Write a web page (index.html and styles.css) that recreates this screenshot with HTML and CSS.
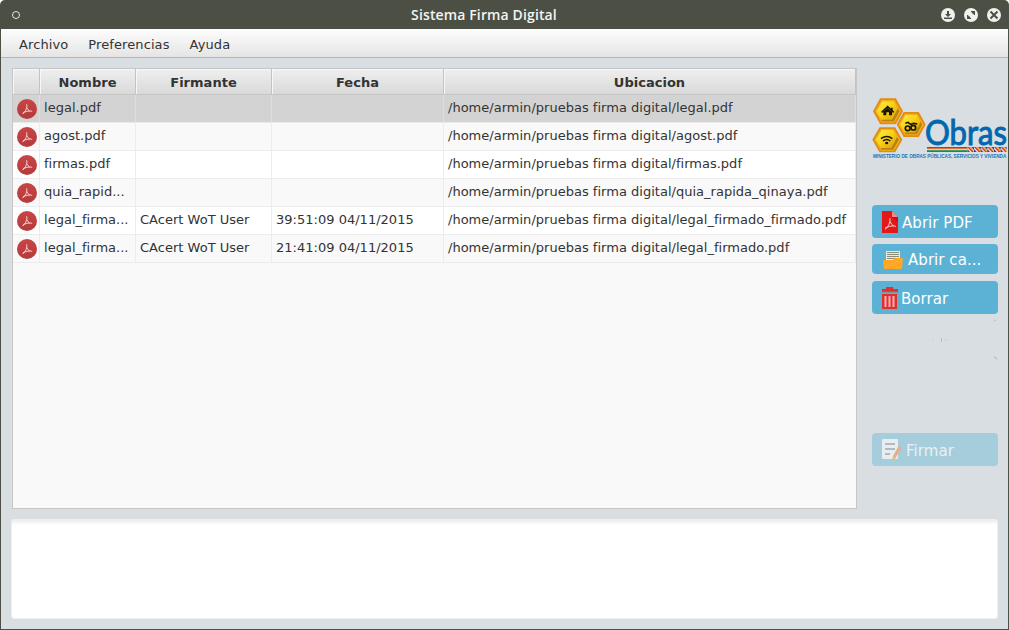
FILE: index.html
```html
<!DOCTYPE html>
<html lang="es">
<head>
<meta charset="utf-8">
<title>Sistema Firma Digital</title>
<link rel="stylesheet" href="styles.css">
</head>
<body>
<svg class="defs" width="0" height="0" aria-hidden="true">
  <defs>
    <linearGradient id="disc" x1="0" y1="0" x2="0" y2="1"><stop offset="0" stop-color="#ca4445"/><stop offset="1" stop-color="#b43a3b"/></linearGradient>
    <symbol id="pdf" viewBox="0 0 20 20">
      <circle cx="10" cy="10" r="10" fill="url(#disc)"/>
      <path d="M9.200 5.200q1 0 .7 2.600-.5 3-2.500 5.600-1.200 1.400-2 1.300M9.700 8.500q1 2.400 3.400 4M6 13.600q4-1.700 7.500-1.700 1.800.1 1.300 1" fill="none" stroke="#f3dede" stroke-width=".9"/>
    </symbol>
    <linearGradient id="gold" x1="0" y1="0" x2="1" y2="1"><stop offset="0" stop-color="#fff04a"/><stop offset=".5" stop-color="#f8cf12"/><stop offset="1" stop-color="#d99a0c"/></linearGradient>
    <symbol id="hex" viewBox="0 0 90 76" preserveAspectRatio="none">
      <path d="M1 38 22 1h46l21 37-21 37H22z" fill="#e38a12"/>
      <path d="M7 38 26 6h38l19 32-19 32H26z" fill="#f3b21c"/>
      <path d="M11 38 28 9h34l17 29-17 29H28z" fill="#b98312"/>
      <path d="M11 38 28 9h34l12 20-17 33H25z" fill="url(#gold)"/>
    </symbol>
    <pattern id="wip" x="322" y="171" width="20" height="15" patternUnits="userSpaceOnUse">
      <path d="M0 0h20v15H0z" fill="#f3e6df"/>
      <path d="M0 0h6l14 15h-6z" fill="#c8232c"/><path d="M6 0h5l9 10v5z" fill="#efc51b"/><path d="M12 0h8v9z" fill="#383c91"/><path d="M0 6l8 9H0z" fill="#51367e"/>
    </pattern>
  </defs>
</svg>
<div class="window">
  <header class="titlebar">
    <span class="dot"></span>
    <h1 class="title">Sistema Firma Digital</h1>
    <div class="controls">
      <svg viewBox="0 0 14 14"><circle cx="7" cy="7" r="7" fill="#f0f1ef"/><path d="M6 3h2v3h2L7 9 4 6h2zM3 9.500h8v1.500H3z" fill="#4b4f44"/></svg>
      <svg viewBox="0 0 14 14"><circle cx="7" cy="7" r="7" fill="#f0f1ef"/><path d="M7 3h4v4H9.700V5.700L9 6 8 5V4.300H7zM3 7h1.300v1.300L5 8l1 1v.7h1V11H3z" fill="#4b4f44"/></svg>
      <svg viewBox="0 0 14 14"><circle cx="7" cy="7" r="7" fill="#f0f1ef"/><path d="M3.500 3.500l7 7m0-7l-7 7" stroke="#4b4f44" stroke-width="2"/></svg>
    </div>
  </header>
  <nav class="menubar"><span>Archivo</span><span>Preferencias</span><span>Ayuda</span></nav>
  <main class="workspace">
    <section class="files">
      <div class="row head"><span></span><span>Nombre</span><span>Firmante</span><span>Fecha</span><span>Ubicacion</span></div>
      <div class="row selected"><span><svg class="pdf"><use href="#pdf"/></svg></span><span>legal.pdf</span><span></span><span></span><span>/home/armin/pruebas firma digital/legal.pdf</span></div>
      <div class="row alt"><span><svg class="pdf"><use href="#pdf"/></svg></span><span>agost.pdf</span><span></span><span></span><span>/home/armin/pruebas firma digital/agost.pdf</span></div>
      <div class="row"><span><svg class="pdf"><use href="#pdf"/></svg></span><span>firmas.pdf</span><span></span><span></span><span>/home/armin/pruebas firma digital/firmas.pdf</span></div>
      <div class="row alt"><span><svg class="pdf"><use href="#pdf"/></svg></span><span>quia_rapid...</span><span></span><span></span><span>/home/armin/pruebas firma digital/quia_rapida_qinaya.pdf</span></div>
      <div class="row"><span><svg class="pdf"><use href="#pdf"/></svg></span><span>legal_firma...</span><span>CAcert WoT User</span><span>39:51:09 04/11/2015</span><span>/home/armin/pruebas firma digital/legal_firmado_firmado.pdf</span></div>
      <div class="row alt"><span><svg class="pdf"><use href="#pdf"/></svg></span><span>legal_firma...</span><span>CAcert WoT User</span><span>21:41:09 04/11/2015</span><span>/home/armin/pruebas firma digital/legal_firmado.pdf</span></div>
    </section>
    <aside class="sidebar">
      <svg class="logo" viewBox="36 24 408 186">
        <use href="#hex" x="38" y="24" width="92" height="80"/>
        <use href="#hex" x="109" y="65" width="89" height="77"/>
        <use href="#hex" x="36" y="111" width="92" height="77"/>
        <path d="M65 67 83 50l18 17" fill="none" stroke="#171507" stroke-width="5"/>
        <path d="M93 53h5v9h-5zM70 65l13-11 13 11v11h-9V67h-8v9h-9z" fill="#171507"/>
        <g fill="none" stroke="#171507" stroke-width="5"><circle cx="143" cy="115" r="7"/><circle cx="160" cy="113" r="7"/><path d="M136 100l8-3 8 6 9-3 11 2"/></g>
        <g fill="none" stroke="#171507" stroke-width="4.500"><path d="M63 146q17-13 34 0M69 153q11-9 22 0"/></g><ellipse cx="80" cy="159" rx="5" ry="4" fill="#171507"/>
        <text class="brand" x="195" y="165" textLength="246" lengthAdjust="spacingAndGlyphs">Obras</text>
        <path d="M201 171h121v5H201z" fill="#d92528"/><path d="M201 176h121v5H201z" fill="#eee02d"/><path d="M201 181h121v5H201z" fill="#148d50"/>
        <path d="M322 171h118v15H322z" fill="url(#wip)"/>
        <text class="ministry" x="39" y="203" textLength="400" lengthAdjust="spacingAndGlyphs">MINISTERIO DE OBRAS PÚBLICAS, SERVICIOS Y VIVIENDA</text>
      </svg>
      <button class="btn open"><svg width="16" height="22" viewBox="0 0 16 22"><path d="M0 0h10l6 6v16H0z" fill="#e31818"/><path d="M10 0l6 6h-6z" fill="#ff8585"/><path d="M10 6h6v5z" fill="#c51012"/><path d="M7.300 7q1 0 .7 3-.6 3.500-2.800 6.500-1.300 1.800-2.200 1.500M8 10.500q1.200 3 3.700 4.500M3 17q4.500-2.200 9-2.200 2 .2 1.500 1.200" fill="none" stroke="#fbd9d9" stroke-width=".9"/></svg><span>Abrir PDF</span></button>
      <button class="btn folder"><svg width="20" height="18" viewBox="0 0 20 18"><path d="M3 0h14v12H3z" fill="#ecebd8"/><path d="M4 1.500h12M4 3.500h12M4 5.500h12M4 7.500h8" stroke="#8b8d78"/><path d="M1 9h9l2-2h7l1 1-1 10H1L0 10z" fill="#ffa726"/></svg><span>Abrir ca...</span></button>
      <button class="btn delete"><svg width="16" height="22" viewBox="0 0 16 22"><path d="M4 0h7v2h5v3H0V2h4zM0 7h15v15H0z" fill="#df3030"/><path d="M0 4.500h16v1H0z" fill="#8c7b82"/><path d="M3.500 9v11M7.500 9v11M11.500 9v11" stroke="#ffafaf" stroke-width="2"/></svg><span>Borrar</span></button>
      <svg class="traces" viewBox="0 0 126 119"><path d="M122 6l2 1M69.500 24v4" stroke="#9fcbdc" fill="none"/><path d="M72 26h4M61 24v3" stroke="#c4d9e1"/><path d="M122 43q2 0 3 2.500" stroke="#87bfd5" fill="none"/></svg>
      <button class="btn sign" disabled><svg width="20" height="22" viewBox="0 0 20 22"><rect width="16" height="20" rx="1" fill="#e9edf0"/><path d="M3 5h10M3 10h10M3 15h5" stroke="#afbcc3" stroke-width="2"/><path d="M16.500 7l3 2-6 10-3 1 .5-3z" fill="#e3ae8c"/><path d="M11 18l3 1-4 3z" fill="#d9c391"/></svg><span>Firmar</span></button>
    </aside>
    <textarea class="log" aria-label="Mensajes"></textarea>
  </main>
</div>
</body>
</html>
```

FILE: styles.css
```css
* { box-sizing: border-box; }
body { margin: 0; background: #fff; font-family: "DejaVu Sans", sans-serif; font-size: 13px; color: #333; }
.defs { position: absolute; }
.window { width: 1009px; height: 630px; padding: 0 1px 1px; background: #4b4f44; border-radius: 5px 5px 0 0; display: flex; flex-direction: column; overflow: hidden; }
.titlebar { height: 29px; flex: none; display: grid; grid-template-columns: 100px 1fr 100px; align-items: center; padding: 0 7px 0 11px; }
.dot { width: 8px; height: 8px; border: 1.500px solid #e4e5e1; border-radius: 50%; margin-top: 1px; }
.title { margin: 0; padding-right: 45px; text-align: center; color: #f4f4f2; font: 600 14px/28px "Open Sans", "Noto Sans", sans-serif; letter-spacing: .13px; white-space: nowrap; }
.controls { display: flex; gap: 9px; justify-content: flex-end; padding-top: 1px; }
.controls svg { width: 14px; height: 14px; }
.menubar { height: 29px; flex: none; display: flex; gap: 20px; padding: 0 18px; line-height: 31px; letter-spacing: .1px; background: linear-gradient(#fdfdfd, #e5e5e5); border-bottom: 1px solid #b5b5b1; }
.workspace { flex: 1; background: #d9dee2; display: grid; grid-template-columns: 845px 136px; column-gap: 15px; grid-template-rows: 441px 101px; row-gap: 10px; padding: 10px 0 0 11px; }
.files { border: 1px solid #c6c6c6; background: #f9f9f9; letter-spacing: .015px; }
.row { display: grid; grid-template-columns: 27px 96px 136px 172px 412px; height: 28px; background: #fff; border-bottom: 1px solid #ececec; line-height: 25px; white-space: nowrap; }
.row span { border-right: 1px solid #ececec; padding-left: 4px; }
.row.alt { background: #f9f9f9; }
.row.selected { background: #d3d3d3; border-color: #e9e9e9; }
.row.selected span { border-color: #dedede; }
.row.head { height: 26px; background: linear-gradient(#efefef, #d9d9d9); border-color: #c5c5c5; font-weight: bold; text-align: center; line-height: 27px; }
.row.head span { height: 25px; border-color: #c3c3c3; padding: 0; box-shadow: inset 1px 1px #f7f7f7; }
.pdf { display: block; width: 20px; height: 20px; margin-top: 4px; }
.sidebar { display: flex; flex-direction: column; align-items: flex-start; padding-top: 30px; }
.logo { width: 136px; height: 62px; flex: none; overflow: visible; }
.brand { font: 104px Lato, sans-serif; fill: #0068b0; stroke: #0068b0; stroke-width: 3px; }
.ministry { font: bold 14px "Liberation Sans", sans-serif; fill: #1575b8; }
.btn { width: 126px; height: 33px; flex: none; border: 0; border-radius: 4px; padding: 1px 0 0 10px; display: flex; align-items: center; background: #5bb2d4; color: #fff; font: 15px "DejaVu Sans", sans-serif; white-space: nowrap; text-align: left; letter-spacing: .05px; }
.btn svg { flex: none; }
.btn span { padding-top: 2px; }
.open { margin-top: 45px; gap: 4px; }
.folder { height: 30px; margin-top: 6px; padding-left: 11px; gap: 5px; }
.folder span { padding-top: 0; }
.delete { margin-top: 7px; gap: 3px; }
.traces { width: 126px; height: 119px; flex: none; }
.sign { gap: 4px; background: #a5cddc; color: #e9f0f3; }
.log { width: 987px; height: 100px; grid-column: 1 / -1; margin-left: -1px; padding: 4px; border: 1px solid #f0f0f0; border-radius: 3px; background: linear-gradient(#ededed, #fff 5px); resize: none; outline: 0; }
```
